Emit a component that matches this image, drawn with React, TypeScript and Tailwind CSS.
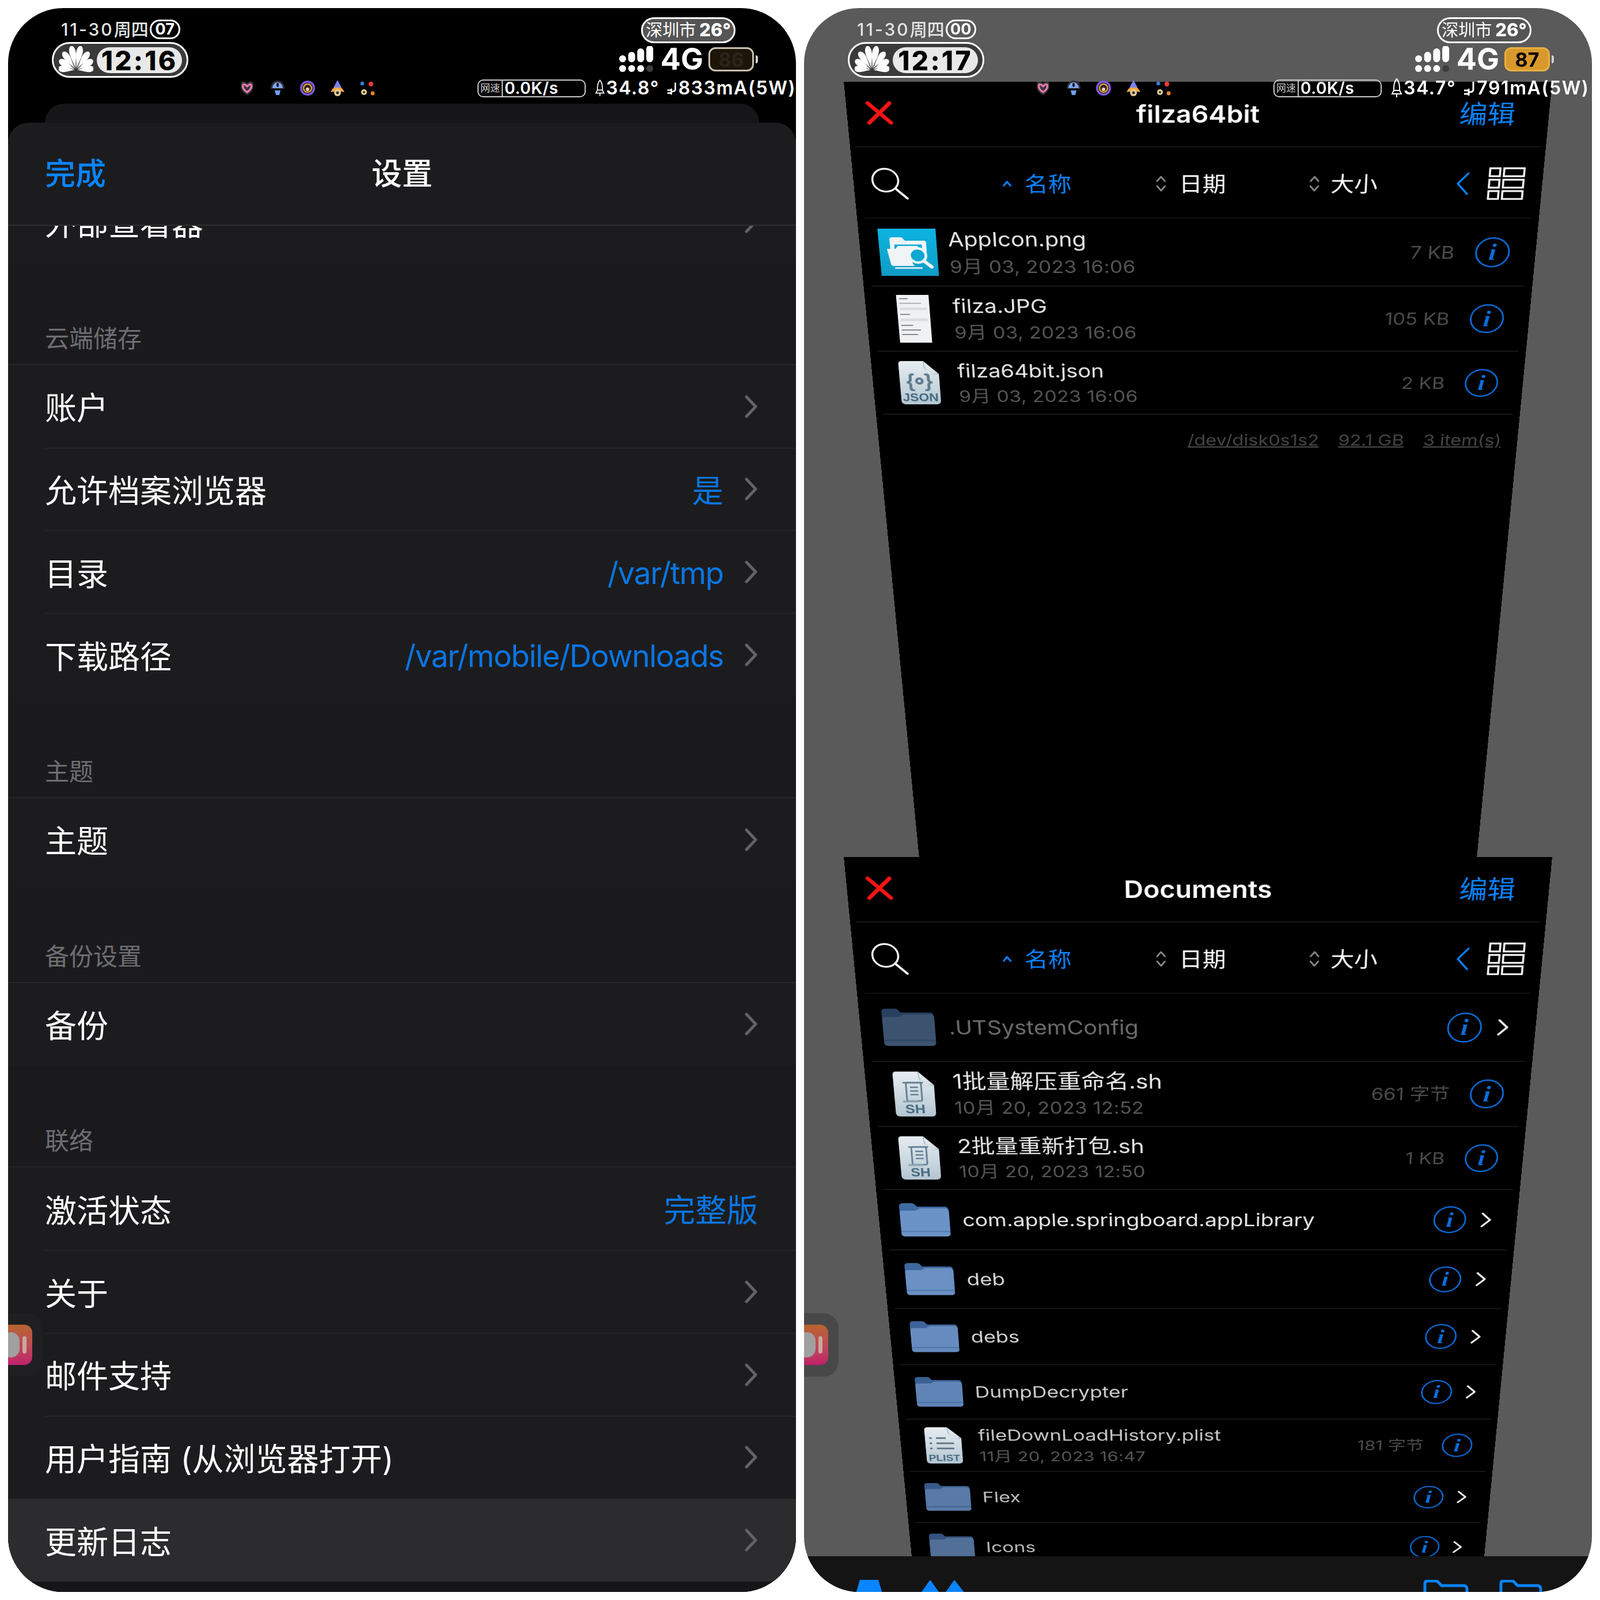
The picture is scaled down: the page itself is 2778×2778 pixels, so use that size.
import React from "react";

const BLUE = "#0a84ff";

function HuaweiLogo() {
  const petals = [
    [-84, 28],
    [-59, 31],
    [-35, 36],
    [-11, 40],
    [11, 40],
    [35, 36],
    [59, 31],
    [84, 28],
  ];
  return (
    <svg width="60" height="48" viewBox="-30 -42 60 48">
      {petals.map(([a, l], i) => (
        <path
          key={i}
          transform={`rotate(${a}) translate(0 -3)`}
          d={`M0 0 C-1.5 ${-l * 0.3} -6.5 ${-l * 0.55} -5.5 ${-l * 0.8} C-4.5 ${-l * 0.95} -2 ${-l} 0 ${-l} C2 ${-l} 4.5 ${-l * 0.95} 5.5 ${-l * 0.8} C6.5 ${-l * 0.55} 1.5 ${-l * 0.3} 0 0Z`}
          fill="#fff"
        />
      ))}
    </svg>
  );
}

function StatusIcons() {
  return (
    <div className="ml-[400px] flex w-[242px] shrink-0 items-center gap-[24px]">
      <svg width="30" height="30" viewBox="0 0 30 30">
        <path d="M15 27 C3 20 3 11 5 5 C9 2 12 4 15 7 C18 4 21 2 25 5 C27 11 27 20 15 27Z" fill="#3a3a3a" />
        <path d="M15 22 C7 17 7 12 8 9 C11 7 13 10 15 12 C17 10 19 7 22 9 C23 12 23 17 15 22Z" fill="none" stroke="#f47ab5" strokeWidth="3" />
      </svg>
      <svg width="28" height="30" viewBox="0 0 28 30">
        <path d="M14 2 C6 2 2 9 2 16 H26 C26 9 22 2 14 2Z" fill="#333" />
        <path d="M14 5 C9 5 5 10 5 15 H23 C23 10 19 5 14 5Z" fill="#7da6f5" />
        <rect x="12" y="6" width="4" height="7" rx="2" fill="#1a1a1a" />
        <path d="M9 19 H19 L17 27 H11Z" fill="#6f9df0" />
      </svg>
      <svg width="28" height="28" viewBox="0 0 28 28">
        <circle cx="14" cy="14" r="13" fill="#7b5be0" />
        <circle cx="14" cy="14" r="9.5" fill="#2a2118" />
        <circle cx="14" cy="14" r="7" fill="none" stroke="#dc9c45" strokeWidth="2.5" />
        <circle cx="14" cy="16" r="3" fill="#e8d8a8" />
      </svg>
      <svg width="28" height="30" viewBox="0 0 28 30">
        <path d="M14 1 L21 14 H7Z" fill="#7a82ee" />
        <path d="M2 22 C5 16 7 14 9 14 H19 C21 14 23 16 26 22 C22 21 21 21 14 21 C7 21 6 21 2 22Z" fill="#f0a745" />
        <circle cx="14" cy="23" r="6" fill="#e0cc98" />
        <circle cx="14" cy="23" r="2.5" fill="#3a3020" />
      </svg>
      <svg width="28" height="30" viewBox="0 0 28 30">
        <circle cx="5" cy="7" r="3.2" fill="#2f82e0" />
        <circle cx="20" cy="8" r="4.2" fill="#ec3a3c" />
        <circle cx="8" cy="22" r="5" fill="#e8d098" />
        <circle cx="8" cy="22" r="2" fill="#3a3020" />
        <circle cx="23" cy="24" r="3.4" fill="#e8822c" />
      </svg>
    </div>
  );
}

function SignalBars() {
  const cols = [12, 18, 24, 29];
  return (
    <svg width="60" height="46" viewBox="0 0 60 46">
      {cols.map((h, i) => (
        <g key={i}>
          <rect x={i * 15.7} y={28 - h} width="12" height={h} rx="6" fill="#fff" />
          <circle cx={6 + i * 15.7} cy="39" r="6" fill={i === 3 ? "#3d3d3d" : "#fff"} />
        </g>
      ))}
    </svg>
  );
}

function StatusBar(p: {
  sec: string;
  time: string;
  battery: string;
  batteryBox: string;
  temp: string;
  current: string;
}) {
  return (
    <div className="relative z-10 flex h-[156px] shrink-0 flex-col">
      <div className="flex h-[122px] justify-between">
        <div className="ml-[76px] mt-[20px] flex flex-col items-start">
          <div className="flex h-[34px] items-center whitespace-nowrap pl-[16px] text-[30px] font-medium text-[#e4e4e4]">
            <span className="tracking-[0.1em]">11-30</span>
            <span className="tracking-normal">周四</span>
            <span className="ml-[2px] flex h-[34px] w-[53px] items-center justify-center rounded-full border-[3px] border-white text-[27px] font-bold tracking-normal text-white">
              {p.sec}
            </span>
          </div>
          <div className="mt-[5px] flex h-[62px] w-[237px] items-center rounded-full border-[3px] border-white bg-[#3a3a3a] pl-[9px]">
            <HuaweiLogo />
            <span className="ml-[6px] flex h-[45px] w-[148px] items-center justify-center whitespace-nowrap rounded-full bg-[#e8e8e8] pt-[3px] text-[46px] font-extrabold tracking-[0.07em] text-black">
              {p.time}
            </span>
          </div>
        </div>
        <div className="mr-[66px] mt-[16px] flex flex-col items-end">
          <div className="mr-[39px] flex h-[45px] w-[164px] items-center justify-center whitespace-nowrap rounded-full border-[3px] border-white bg-[#555555] text-[29px] text-white">
            <span>深圳市</span>
            <span className="ml-[6px] text-[31px] font-extrabold">26°</span>
          </div>
          <div className="mt-[4px] flex items-center">
            <SignalBars />
            <span className="ml-[12px] text-[52px] font-bold leading-[48px] text-white">4G</span>
            <span className={`ml-[9px] flex h-[42px] w-[79px] items-center justify-center rounded-[12px] border-[3px] text-[34px] font-bold ${p.batteryBox}`}>
              {p.battery}
            </span>
            <span className="ml-[3px] h-[14px] w-[4px] rounded-r-full bg-[#d0d0d0]" />
          </div>
        </div>
      </div>
      <div className="flex h-[34px] items-center whitespace-nowrap text-[32px] font-semibold tracking-[0.05em] text-white">
        <StatusIcons />
        <div className="ml-[173px] flex h-[31px] w-[188px] shrink-0 items-center rounded-[10px] border-2 border-[#c8c8c8] text-[28px]">
          <span className="w-[42px] border-r-2 border-[#c8c8c8] text-center text-[17px] font-normal leading-[27px] tracking-normal text-[#d0d0d0]">
            网速
          </span>
          <span className="ml-[3px] tracking-[0.02em]">0.0K/s</span>
        </div>
        <svg className="ml-[16px]" width="20" height="36" viewBox="0 0 20 36">
          <path d="M10 2 C5 8 5 14 5 22 H15 C15 14 15 8 10 2Z M5 22 L2 28 H18 L15 22 M10 28 V34" fill="none" stroke="#fff" strokeWidth="2" />
        </svg>
        <span className="ml-[2px]">{p.temp}</span>
        <svg className="ml-[12px]" width="24" height="28" viewBox="0 0 24 28">
          <path d="M18 3 V17 C18 21 13 21 10 21 M2 18 H10 M2 24 H10 M10 15 L10 27" fill="none" stroke="#fff" strokeWidth="3" />
        </svg>
        <span>{p.current}</span>
      </div>
    </div>
  );
}

function SetChevron() {
  return (
    <svg className="ml-[36px] shrink-0" width="24" height="40" viewBox="0 0 24 40">
      <path d="M4 3 L20 20 L4 37" fill="none" stroke="#636366" strokeWidth="5" strokeLinecap="round" strokeLinejoin="round" />
    </svg>
  );
}

function SetRow(p: { label: string; value?: string; latin?: boolean; noChevron?: boolean; active?: boolean; first?: boolean }) {
  return (
    <div className={`flex h-[143.75px] shrink-0 items-center pl-[64px] pr-[66px] ${p.active ? "bg-[#2c2c2e]" : ""} ${p.first ? "mt-[-79px]" : ""}`}>
      <span className="pt-[6px] text-[55px] text-white">{p.label}</span>
      <span className={`ml-auto pt-[6px] ${p.latin ? "text-[53px] tracking-[-0.025em]" : "text-[54.5px]"} text-[#0a76e4]`}>{p.value}</span>
      {!p.noChevron && <SetChevron />}
    </div>
  );
}

function Sep() {
  return <div className="ml-[64px] -mb-[2px] h-[2px] shrink-0 -translate-y-[1px] bg-[#252527]" />;
}

function Section({ title }: { title: string }) {
  return (
    <div className="flex h-[177px] shrink-0 items-end border-b-2 border-[#262628] bg-[#1a1a1c] pb-[13px] pl-[64px] text-[42px] text-[#6e6e73]">
      {title}
    </div>
  );
}

function AppTile({ tile }: { tile: string }) {
  return (
    <div className={`absolute left-0 top-[2266px] flex h-[110px] w-[60px] items-center rounded-r-[26px] ${tile}`}>
      <div className="relative h-[70px] w-[42px] overflow-hidden rounded-r-[14px] bg-gradient-to-b from-[#b8642c] to-[#c01f6c]">
        <div className="absolute left-[-10px] top-[13px] h-[44px] w-[30px] rounded-full bg-[#a0a0a0]" />
        <div className="absolute left-[25px] top-[20px] h-[30px] w-[7px] rounded-full bg-[#c8a8a0]" />
      </div>
    </div>
  );
}

function LeftPhone() {
  return (
    <div className="relative flex h-[2750px] w-[1368px] flex-col overflow-hidden rounded-[96px] bg-black">
      <StatusBar sec="07" time="12:16" battery="86" batteryBox="border-[#c9c0ae] bg-[#1d1508] text-[#2c2418]" temp="34.8°" current="833mA(5W)" />
      <div className="mx-[64px] mt-[10px] h-[33px] shrink-0 rounded-t-[36px] bg-[#161618]" />
      <div className="flex min-h-0 flex-1 flex-col overflow-hidden rounded-t-[36px] bg-[#1c1c1e]">
        <div className="z-10 grid h-[179px] shrink-0 grid-cols-[1fr_auto_1fr] items-center border-b-2 border-[#2e2e30] bg-[#1c1c1e] px-[64px] pt-[3px] text-[53px]">
          <span className="font-medium text-[#0a84ff]">完成</span>
          <span className="font-medium text-white">设置</span>
          <span />
        </div>
        <div className="flex min-h-0 flex-1 flex-col overflow-hidden">
          <SetRow first label="外部查看器" />
          <Section title="云端储存" />
          <SetRow label="账户" />
          <Sep />
          <SetRow label="允许档案浏览器" value="是" />
          <Sep />
          <SetRow label="目录" value="/var/tmp" latin />
          <Sep />
          <SetRow label="下载路径" value="/var/mobile/Downloads" latin />
          <Section title="主题" />
          <SetRow label="主题" />
          <Section title="备份设置" />
          <SetRow label="备份" />
          <Section title="联络" />
          <SetRow label="激活状态" value="完整版" noChevron />
          <Sep />
          <SetRow label="关于" />
          <Sep />
          <SetRow label="邮件支持" />
          <Sep />
          <SetRow label="用户指南 (从浏览器打开)" />
          <SetRow label="更新日志" active />
          <div className="flex-1 bg-[#161618]" />
        </div>
      </div>
      <AppTile tile="bg-[#1f1f21]" />
    </div>
  );
}

function InfoIcon() {
  return (
    <span className="flex h-[63px] w-[63px] shrink-0 items-center justify-center rounded-full border-[3.5px] border-[#0a6fe0] font-['Liberation_Serif',serif] text-[48px] font-bold italic leading-none text-[#0a6fe0]">
      i
    </span>
  );
}

function RowChevron() {
  return (
    <svg className="ml-[28px] shrink-0" width="22" height="36" viewBox="0 0 22 36">
      <path d="M3 3 L18 18 L3 33" fill="none" stroke="#f0f0f0" strokeWidth="4" strokeLinecap="round" strokeLinejoin="round" />
    </svg>
  );
}

function Folder({ body, tab }: { body: string; tab: string }) {
  return (
    <svg width="98" height="80" viewBox="0 0 98 80">
      <path d="M2 8 C2 3 5 1 9 1 H26 C31 1 33 4 36 9 H90 C94 9 96 12 96 16 V30 H2Z" fill={tab} />
      <path d="M2 24 C2 20 4 18 8 18 H32 C36 18 38 14 42 13 H90 C94 13 97 16 97 20 V72 C97 77 94 79 90 79 H9 C5 79 2 77 2 72Z" fill={body} />
      <rect x="2" y="66" width="95" height="3" fill={tab} opacity="0.55" />
    </svg>
  );
}

function DocIcon({ kind }: { kind: "JSON" | "SH" | "PLIST" }) {
  const id = `doc${kind}`;
  return (
    <svg width="80" height="100" viewBox="0 0 80 100">
      <defs>
        <linearGradient id={id} x1="0" y1="0" x2="0" y2="1">
          <stop offset="0" stopColor="#e6edf1" />
          <stop offset="1" stopColor="#b4c6d2" />
        </linearGradient>
      </defs>
      <path d="M9 1 H50 L78 30 V90 C78 96 75 99 70 99 H11 C6 99 3 96 3 90 V8 C3 4 5 1 9 1Z" fill={`url(#${id})`} />
      <path d="M50 1 C50 18 58 29 78 30 C62 34 50 30 50 1Z" fill="#f4f7f9" stroke="#8aa0ae" strokeWidth="0.8" />
      {kind === "JSON" && (
        <g>
          <text x="15" y="60" fontSize="42" fill="#5f7a8c" fontWeight="700" fontFamily="Liberation Sans">
            {"{"}
          </text>
          <text x="49" y="60" fontSize="42" fill="#5f7a8c" fontWeight="700" fontFamily="Liberation Sans">
            {"}"}
          </text>
          <circle cx="40" cy="46" r="8" fill="#5f7a8c" />
          <circle cx="40" cy="46" r="3" fill="#d3dee5" />
        </g>
      )}
      {kind === "SH" && (
        <g fill="none" stroke="#5f7a8c" strokeWidth="3">
          <rect x="26" y="25" width="28" height="40" rx="3" />
          <path d="M20 25 H58 M33 35 H48 M33 43 H48 M33 51 H48" />
          <path d="M18 66 H46" strokeWidth="4" stroke="#8aa4b2" />
        </g>
      )}
      {kind === "PLIST" && (
        <g stroke="#5d7282" strokeWidth="4.5">
          <path d="M12 30 H17 M26 30 H46 M12 44 H17 M26 44 H62 M12 58 H17 M26 58 H62" />
        </g>
      )}
      <text x="40" y="92" textAnchor="middle" fontSize={kind === "PLIST" ? 23 : kind === "SH" ? 27 : 25} fontWeight="700" fill="#456a80" fontFamily="Liberation Sans">
        {kind}
      </text>
    </svg>
  );
}

function PngIcon() {
  return (
    <svg width="105" height="99" viewBox="0 0 105 99">
      <defs>
        <linearGradient id="teal" x1="0" y1="0" x2="0" y2="1">
          <stop offset="0" stopColor="#0cb4e0" />
          <stop offset="1" stopColor="#0f9cc6" />
        </linearGradient>
      </defs>
      <rect width="105" height="99" fill="url(#teal)" />
      <path d="M20 22 C20 19 22 18 24 18 H42 L48 25 H82 C85 25 86 27 86 29 V50 H78 V33 H28 V50 H20Z" fill="#f0f4f5" />
      <path d="M14 42 H30 L34 36 H70 L73 44 A22 22 0 0 0 62 78 H24 C21 78 20 77 19 74Z" fill="#f0f4f5" />
      <circle cx="69" cy="56" r="15" fill="#0ea8d2" stroke="#f0f4f5" strokeWidth="5" />
      <path d="M80 68 L93 80" stroke="#f0f4f5" strokeWidth="7" strokeLinecap="round" />
      <rect x="26" y="81" width="50" height="3" fill="#f0f4f5" />
    </svg>
  );
}

function JpgThumb() {
  const bands = [
    ["w-[16px]", "bg-[#666a70]", false],
    ["w-[40px]", "bg-[#9a9ea6]", false],
    ["w-[50px]", "bg-[#dcdde0]", true],
    ["w-[18px]", "bg-[#777a80]", false],
    ["w-[50px]", "bg-[#dcdde0]", true],
    ["w-[22px]", "bg-[#777a80]", false],
    ["w-[36px]", "bg-[#888c92]", false],
    ["w-[30px]", "bg-[#666a70]", false],
  ] as const;
  return (
    <div className="flex h-[104px] w-[60px] flex-col bg-[#f0f1f3] pl-[5px] pt-[7px]">
      {bands.map(([w, c, thick], i) => (
        <div key={i} className={`mb-[8px] shrink-0 ${w} ${c} ${thick ? "h-[6px]" : "h-[2px]"}`} />
      ))}
    </div>
  );
}

type R = {
  name: string;
  date?: string;
  size?: string;
  icon: React.ReactNode;
  folder?: boolean;
  nameColor?: string;
  cjk?: boolean;
};

function FileRow({ r }: { r: R }) {
  return (
    <div className="mx-[14px] flex h-[142.5px] shrink-0 items-center border-b-2 border-[#1c1c1e]">
      <div className="flex w-[147px] shrink-0 justify-center">{r.icon}</div>
      <div className="flex min-w-0 flex-1 flex-col justify-center">
        <span className={`${r.cjk ? "text-[44px]" : "text-[41.5px]"} leading-[50px]`} style={{ color: r.nameColor ?? "#e8e8e8" }}>
          {r.name}
        </span>
        {r.date && <span className="mt-[11px] text-[37px] leading-[44px] tracking-[0.01em] text-[#565656]">{r.date}</span>}
      </div>
      {r.size && <span className="mr-[38px] text-[37px] text-[#4c4c4c]">{r.size}</span>}
      <InfoIcon />
      {r.folder ? <RowChevron /> : null}
      <span className={`shrink-0 ${r.folder ? "w-[34px]" : "w-[33px]"}`} />
    </div>
  );
}

function UpDown() {
  return (
    <svg width="20" height="36" viewBox="0 0 20 36" className="shrink-0">
      <path d="M3 13 L10 4 L17 13 M3 23 L10 32 L17 23" fill="none" stroke="#8a8a8e" strokeWidth="3" strokeLinecap="round" strokeLinejoin="round" />
    </svg>
  );
}

function Pane({ title, rows, footer }: { title: string; rows: R[]; footer?: boolean }) {
  return (
    <div className="flex h-[1879px] w-[1230px] shrink-0 origin-top flex-col overflow-hidden bg-black [transform:perspective(2885px)_rotateX(-24.5deg)]">
      <div className="mx-[10px] grid h-[127px] shrink-0 grid-cols-[1fr_auto_1fr] items-center border-b-2 border-[#1a1a1c]">
        <svg className="mb-[6px] ml-[24px]" width="46" height="46" viewBox="0 0 46 46">
          <path d="M4 4 L42 42 M42 4 L4 42" stroke="#ff1414" strokeWidth="7" strokeLinecap="round" />
        </svg>
        <span className="text-[47px] font-semibold text-white">{title}</span>
        <span className="mr-[49px] justify-self-end text-[49px] text-[#0a84ff]">编辑</span>
      </div>
      <div className="mx-[14px] flex h-[144px] shrink-0 items-center border-b-2 border-[#141416] pt-[4px] text-[42px] text-white">
        <svg className="ml-[17px] shrink-0" width="66" height="66" viewBox="0 0 66 66">
          <circle cx="26" cy="26" r="23" fill="none" stroke="#fff" strokeWidth="3.5" />
          <path d="M43 43 L63 63" stroke="#fff" strokeWidth="4.5" strokeLinecap="round" />
        </svg>
        <svg className="ml-[168px] shrink-0" width="18" height="14" viewBox="0 0 18 14">
          <path d="M3 11 L9 3 L15 11" fill="none" stroke="#0a84ff" strokeWidth="3.5" strokeLinecap="round" strokeLinejoin="round" />
        </svg>
        <span className="ml-[22px] text-[#0a84ff]">名称</span>
        <span className="ml-[150px] flex items-center">
          <UpDown />
          <span className="ml-[22px]">日期</span>
        </span>
        <span className="ml-[148px] flex items-center">
          <UpDown />
          <span className="ml-[19px]">大小</span>
        </span>
        <svg className="ml-[140px] shrink-0" width="24" height="48" viewBox="0 0 24 48">
          <path d="M21 3 L3 24 L21 45" fill="none" stroke="#0a84ff" strokeWidth="3.5" strokeLinecap="round" strokeLinejoin="round" />
        </svg>
        <svg className="ml-[33px] shrink-0" width="65" height="66" viewBox="0 0 65 66" fill="none" stroke="#fff" strokeWidth="3.5">
          <rect x="2" y="2" width="18" height="16" />
          <rect x="27" y="2" width="36" height="16" />
          <rect x="2" y="25" width="18" height="16" />
          <rect x="27" y="25" width="36" height="16" />
          <rect x="2" y="48" width="18" height="16" />
          <rect x="27" y="48" width="36" height="16" />
        </svg>
      </div>
      {rows.map((r) => (
        <FileRow key={r.name} r={r} />
      ))}
      {footer && (
        <div className="flex justify-end gap-[37px] pr-[31px] pt-[32px] text-[36px] text-[#454545] underline">
          <span>/dev/disk0s1s2</span>
          <span>92.1 GB</span>
          <span>3 item(s)</span>
        </div>
      )}
    </div>
  );
}

const filzaRows: R[] = [
  { name: "AppIcon.png", date: "9月 03, 2023 16:06", size: "7 KB", icon: <PngIcon /> },
  { name: "filza.JPG", date: "9月 03, 2023 16:06", size: "105 KB", icon: <JpgThumb /> },
  { name: "filza64bit.json", date: "9月 03, 2023 16:06", size: "2 KB", icon: <DocIcon kind="JSON" /> },
];

const docRows: R[] = [
  { name: ".UTSystemConfig", folder: true, nameColor: "#6c6c6c", icon: <Folder body="#3c5370" tab="#27405f" /> },
  { name: "1批量解压重命名.sh", cjk: true, date: "10月 20, 2023 12:52", size: "661 字节", icon: <DocIcon kind="SH" /> },
  { name: "2批量重新打包.sh", cjk: true, date: "10月 20, 2023 12:50", size: "1 KB", icon: <DocIcon kind="SH" /> },
  { name: "com.apple.springboard.appLibrary", folder: true, icon: <Folder body="#6c93c7" tab="#3f6aa3" /> },
  { name: "deb", folder: true, nameColor: "#d8d8d8", icon: <Folder body="#6a90c4" tab="#3e679f" /> },
  { name: "debs", folder: true, nameColor: "#d4d4d4", icon: <Folder body="#668cbf" tab="#3c649b" /> },
  { name: "DumpDecrypter", folder: true, nameColor: "#cecece", icon: <Folder body="#6084b6" tab="#3a6094" /> },
  { name: "fileDownLoadHistory.plist", date: "11月 20, 2023 16:47", size: "181 字节", nameColor: "#c8c8c8", icon: <DocIcon kind="PLIST" /> },
  { name: "Flex", folder: true, nameColor: "#c0c0c0", icon: <Folder body="#597aa8" tab="#375a8a" /> },
  { name: "Icons", folder: true, nameColor: "#bababa", icon: <Folder body="#526f98" tab="#34537e" /> },
];

function RightPhone() {
  return (
    <div className="relative flex h-[2750px] w-[1368px] flex-col overflow-hidden rounded-[96px] bg-[#5a5a5a]">
      <div className="mb-[-28px]">
        <StatusBar sec="00" time="12:17" battery="87" batteryBox="border-[#e8b040] bg-[#d8982c] text-black" temp="34.7°" current="791mA(5W)" />
      </div>
      <div className="flex h-[1346px] shrink-0 justify-center overflow-hidden">
        <Pane title="filza64bit" rows={filzaRows} footer />
      </div>
      <div className="flex h-[1214px] shrink-0 justify-center overflow-hidden">
        <Pane title="Documents" rows={docRows} />
      </div>
      <div className="flex min-h-0 flex-1 items-start justify-between overflow-hidden bg-[#141414] pl-[85px] pr-[85px] pt-[41px]">
        <div className="flex gap-[58px]">
          <svg width="56" height="40" viewBox="0 0 56 40">
            <path d="M12 0 H44 L56 40 H0Z" fill={BLUE} />
          </svg>
          <svg width="84" height="40" viewBox="0 0 84 40">
            <path d="M20 0 L40 28 L20 52 L0 28Z M62 0 L84 28 L62 52 L42 28Z" fill={BLUE} />
          </svg>
        </div>
        <div className="flex gap-[52px]">
          <svg width="80" height="40" viewBox="0 0 80 40" fill="none" stroke={BLUE} strokeWidth="5">
            <path d="M3 40 V6 C3 3 5 2 8 2 H24 L32 10 H70 C74 10 76 12 76 16 V24 M3 24 H78 V40" />
          </svg>
          <svg width="76" height="40" viewBox="0 0 76 40" fill="none" stroke={BLUE} strokeWidth="5">
            <path d="M3 40 V6 C3 3 5 2 8 2 H24 L32 10 H66 C70 10 72 12 72 16 V24 M3 24 H74 V40" />
          </svg>
        </div>
      </div>
      <AppTile tile="bg-[#484848]" />
    </div>
  );
}

export default function App() {
  return (
    <div className="flex h-[2778px] w-[2778px] gap-[14px] bg-white p-[14px] font-['Inter','Noto_Sans_CJK_SC',sans-serif]">
      <LeftPhone />
      <RightPhone />
    </div>
  );
}
